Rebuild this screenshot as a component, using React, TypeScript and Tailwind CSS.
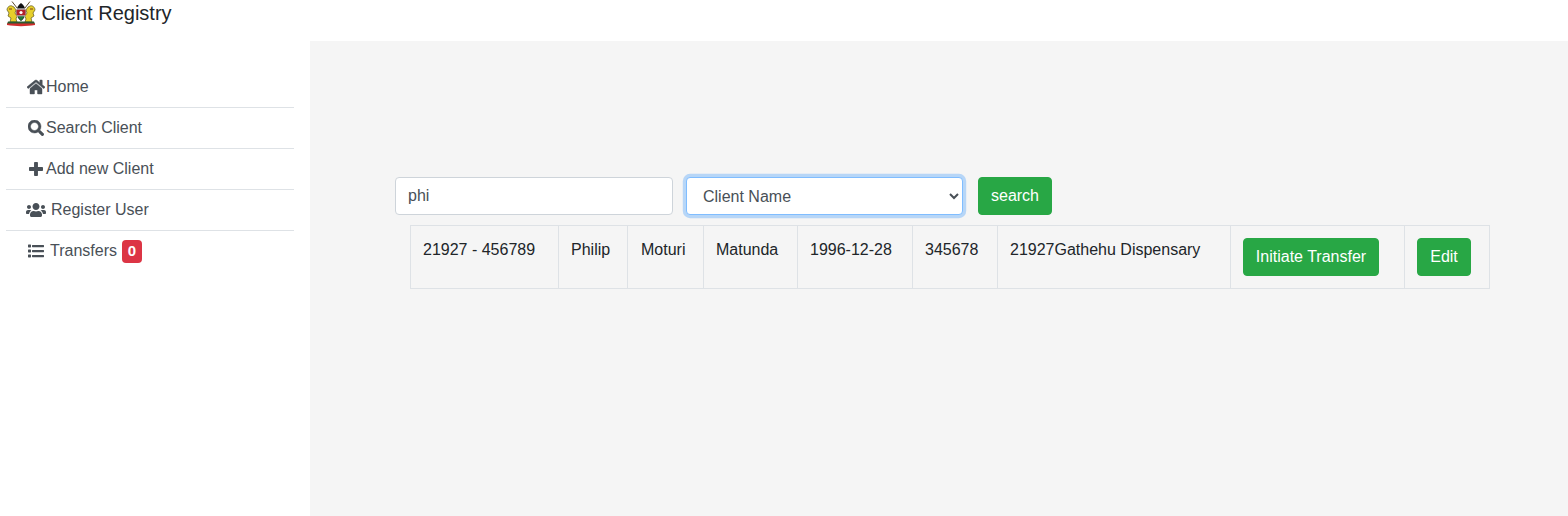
import React from 'react';
import { FaHome, FaSearch, FaUsers } from 'react-icons/fa';

const Emblem = () => (
  <svg width="30" height="26" viewBox="0 0 30 26" className="shrink-0">
    {/* spears */}
    <path d="M6 0.5l7 9M24 0.5l-7 9" stroke="#5b4a2a" strokeWidth="1" />
    {/* lions */}
    <path d="M1 9c0-3 3-5 5-4l2 1 2 3-1 3 2 3-1 3 1 3H4l1-4-3-2 1-3z" fill="#e6cf2a" stroke="#5f551c" strokeWidth="0.7" />
    <path d="M29 9c0-3-3-5-5-4l-2 1-2 3 1 3-2 3 1 3-1 3h7l-1-4 3-2-1-3z" fill="#e6cf2a" stroke="#5f551c" strokeWidth="0.7" />
    <path d="M3 8h3M27 8h-3" stroke="#7a3a1a" strokeWidth="1" />
    {/* shield */}
    <path d="M15 2c3 2 4.5 5 4.5 9s-1.5 7-4.5 9c-3-2-4.5-5-4.5-9s1.5-7 4.5-9z" fill="#111" />
    <path d="M10.6 8.5h8.8v6h-8.8z" fill="#b3202a" />
    <path d="M10.6 8h8.8M10.6 15h8.8" stroke="#fff" strokeWidth="1" />
    <path d="M11.5 15.6h7l-3.5 4.2z" fill="#1f7a3a" />
    <circle cx="15" cy="11.5" r="1.6" fill="#fff" />
    {/* mount and ribbon */}
    <path d="M2 20.5h26l1 2.5H1z" fill="#2a5a30" />
    <path d="M1 22.5h28v1.6c-8 1.4-20 1.4-28 0z" fill="#d12c2c" />
  </svg>
);

const ListIcon = () => (
  <svg width="16" height="16" viewBox="0 0 512 512" fill="currentColor">
    <path d="M128 116V76c0-8.837 7.163-16 16-16h352c8.837 0 16 7.163 16 16v40c0 8.837-7.163 16-16 16H144c-8.837 0-16-7.163-16-16zm16 176h352c8.837 0 16-7.163 16-16v-40c0-8.837-7.163-16-16-16H144c-8.837 0-16 7.163-16 16v40c0 8.837 7.163 16 16 16zm0 160h352c8.837 0 16-7.163 16-16v-40c0-8.837-7.163-16-16-16H144c-8.837 0-16 7.163-16 16v40c0 8.837 7.163 16 16 16zM16 144h64c8.837 0 16-7.163 16-16V64c0-8.837-7.163-16-16-16H16C7.163 48 0 55.163 0 64v64c0 8.837 7.163 16 16 16zm0 160h64c8.837 0 16-7.163 16-16v-64c0-8.837-7.163-16-16-16H16c-8.837 0-16 7.163-16 16v64c0 8.837 7.163 16 16 16zm0 160h64c8.837 0 16-7.163 16-16v-64c0-8.837-7.163-16-16-16H16c-8.837 0-16 7.163-16 16v64c0 8.837 7.163 16 16 16z" />
  </svg>
);

const PlusIcon = () => (
  <svg width="16" height="16" viewBox="0 0 448 512" fill="currentColor">
    <path d="M448 294.2v-76.4c0-13.3-10.7-24-24-24H286.2V56c0-13.3-10.7-24-24-24h-76.4c-13.3 0-24 10.7-24 24v137.8H24c-13.3 0-24 10.7-24 24v76.4c0 13.3 10.7 24 24 24h137.8V456c0 13.3 10.7 24 24 24h76.4c13.3 0 24-10.7 24-24V318.2H424c13.3 0 24-10.7 24-24z" />
  </svg>
);

const navItems = [
  { label: 'Home', icon: <FaHome className="text-[18px] [stroke-width:14]" />, pad: 'pl-[21px]', gap: 'ml-[1px]' },
  { label: 'Search Client', icon: <FaSearch className="text-[16px] [stroke-width:14]" />, pad: 'pl-[22px]', gap: 'ml-[2px]' },
  { label: 'Add new Client', icon: <PlusIcon />, pad: 'pl-[22px]', gap: 'ml-[2px]' },
  { label: 'Register User', icon: <FaUsers className="text-[20px]" />, pad: 'pl-[20px]', gap: 'ml-[5px]' },
  { label: 'Transfers', icon: <ListIcon />, pad: 'pl-[22px]', gap: 'ml-[6px]' },
];

const cells = [
  { text: '21927 - 456789', w: 'w-[148px] p-3' },
  { text: 'Philip', w: 'w-[69px] p-3' },
  { text: 'Moturi', w: 'w-[76px] p-3 pl-[13px]' },
  { text: 'Matunda', w: 'w-[94px] p-3' },
  { text: '1996-12-28', w: 'w-[115px] p-3' },
  { text: '345678', w: 'w-[85px] p-3' },
  { text: '21927Gathehu Dispensary', w: 'w-[233px] p-3' },
];

export default function App() {
  return (
    <div className="font-['Liberation_Sans',Arial,sans-serif] text-[16px] leading-6 text-[#212529] bg-white min-h-[516px]">
      <header className="flex items-start h-[41px] pl-[6px] pt-[1px] bg-white">
        <Emblem />
        <span className="ml-[5.5px] text-[20px] leading-[24px]">Client Registry</span>
      </header>
      <div className="flex h-[475px]">
        <aside className="w-[310px] shrink-0 pt-[26px] pl-[6px] pr-[16px]">
          {navItems.map((item, i) => (
            <div
              key={item.label}
              className={`flex items-center h-[41px] pb-px text-[#495057] ${item.pad} ${i < navItems.length - 1 ? 'border-b border-[#dee2e6]' : ''}`}
            >
              {item.icon}
              <span className={item.gap}>{item.label}</span>
              {item.label === 'Transfers' && (
                <span className="ml-[5px] flex items-center justify-center w-[20px] h-[23px] rounded-[4px] bg-[#dc3545] text-white text-[15px] font-bold">
                  0
                </span>
              )}
            </div>
          ))}
        </aside>
        <main className="flex-1 bg-[#f5f5f5] pl-[85px] pt-[136px]">
          <div className="flex items-center">
            <input
              readOnly
              value="phi"
              className="w-[277.5px] h-[38px] px-3 bg-white border border-[#ced4da] rounded-[4px] text-[#495057] outline-none"
            />
            <select className="ml-[13.5px] w-[277px] h-[38px] px-3 bg-white border border-[#80bdff] rounded-[4px] text-[#495057] outline-none shadow-[0_0_0_3.2px_rgba(0,123,255,0.25)]">
              <option>Client Name</option>
            </select>
            <button className="ml-[15px] h-[38px] w-[74px] bg-[#28a745] border border-[#28a745] rounded-[4px] text-white">
              search
            </button>
          </div>
          <table className="ml-[15px] mt-[10px] w-[1080px] table-fixed border-collapse">
            <tbody>
              <tr className="h-[63px]">
                {cells.map((c) => (
                  <td key={c.text} className={`${c.w} align-top border border-[#dee2e6]`}>
                    {c.text}
                  </td>
                ))}
                <td className="w-[174px] p-3 align-top border border-[#dee2e6]">
                  <button className="block h-[38px] w-[136px] bg-[#28a745] border border-[#28a745] rounded-[4px] text-white">
                    Initiate Transfer
                  </button>
                </td>
                <td className="p-3 align-top border border-[#dee2e6]">
                  <button className="block h-[38px] w-[54px] bg-[#28a745] border border-[#28a745] rounded-[4px] text-white">
                    Edit
                  </button>
                </td>
              </tr>
            </tbody>
          </table>
        </main>
      </div>
    </div>
  );
}
